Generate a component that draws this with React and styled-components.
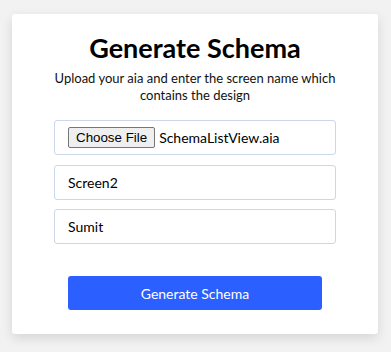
import styled, { createGlobalStyle } from 'styled-components';

const GlobalStyle = createGlobalStyle`
	html, body {
		margin: 0;
		padding: 0;
		background: #f2f2f2;
		font-family: Lato, 'Noto Sans', sans-serif;
	}
`;

const App = () => {
	return (
		<Page>
			<GlobalStyle />
			<Card>
				<Title>Generate Schema</Title>
				<Subtitle>
					Upload your aia and enter the screen name which contains the design
				</Subtitle>
				<Fields>
					<Field>
						<FileButton type='button'>Choose File</FileButton>
						<FileName>SchemaListView.aia</FileName>
					</Field>
					<TextInput defaultValue='Screen2' />
					<TextInput defaultValue='Sumit' />
				</Fields>
				<Submit type='button'>Generate Schema</Submit>
			</Card>
		</Page>
	);
};

const Page = styled.main`
	padding: 14px 13px 18px 12px;
`;

const Card = styled.section`
	background: #fff;
	border-radius: 3px;
	box-shadow: 0 4px 12px rgba(0, 0, 0, 0.12);
	padding: 20px 42px 24px;
	display: flex;
	flex-direction: column;
	align-items: center;
`;

const Title = styled.h1`
	margin: 0;
	font-size: 27px;
	line-height: 27px;
	font-weight: 700;
	color: #000;
`;

const Subtitle = styled.p`
	margin: 9px 0 16px;
	font-size: 13px;
	line-height: 17px;
	text-align: center;
	color: #111;
	width: 300px;
`;

const Fields = styled.div`
	align-self: stretch;
	display: flex;
	flex-direction: column;
	gap: 9.5px;
`;

const Field = styled.div`
	height: 35px;
	box-sizing: border-box;
	border: 1px solid #cbd8ea;
	border-radius: 3px;
	display: flex;
	align-items: center;
	padding: 0 13px;
	gap: 4px;
`;

const FileButton = styled.button`
	font-family: 'Liberation Sans', Arial, sans-serif;
	font-size: 13.33px;
	color: #000;
	background: #efefef;
	border: 1px solid #767676;
	border-radius: 2px;
	padding: 1px 7px;
	height: 21px;
`;

const FileName = styled.span`
	font-size: 14px;
	color: #000;
`;

const TextInput = styled.input`
	height: 35px;
	box-sizing: border-box;
	border: 1px solid #cbd8ea;
	border-radius: 3px;
	padding: 0 13px;
	font-family: Lato, sans-serif;
	font-size: 14px;
	color: #000;
	outline: none;
`;

const Submit = styled.button`
	margin-top: 32px;
	width: 254px;
	height: 34px;
	border: none;
	border-radius: 3px;
	background: #2b5fff;
	color: #fff;
	font-family: Lato, sans-serif;
	font-size: 14px;
	cursor: pointer;
`;

export default App;
